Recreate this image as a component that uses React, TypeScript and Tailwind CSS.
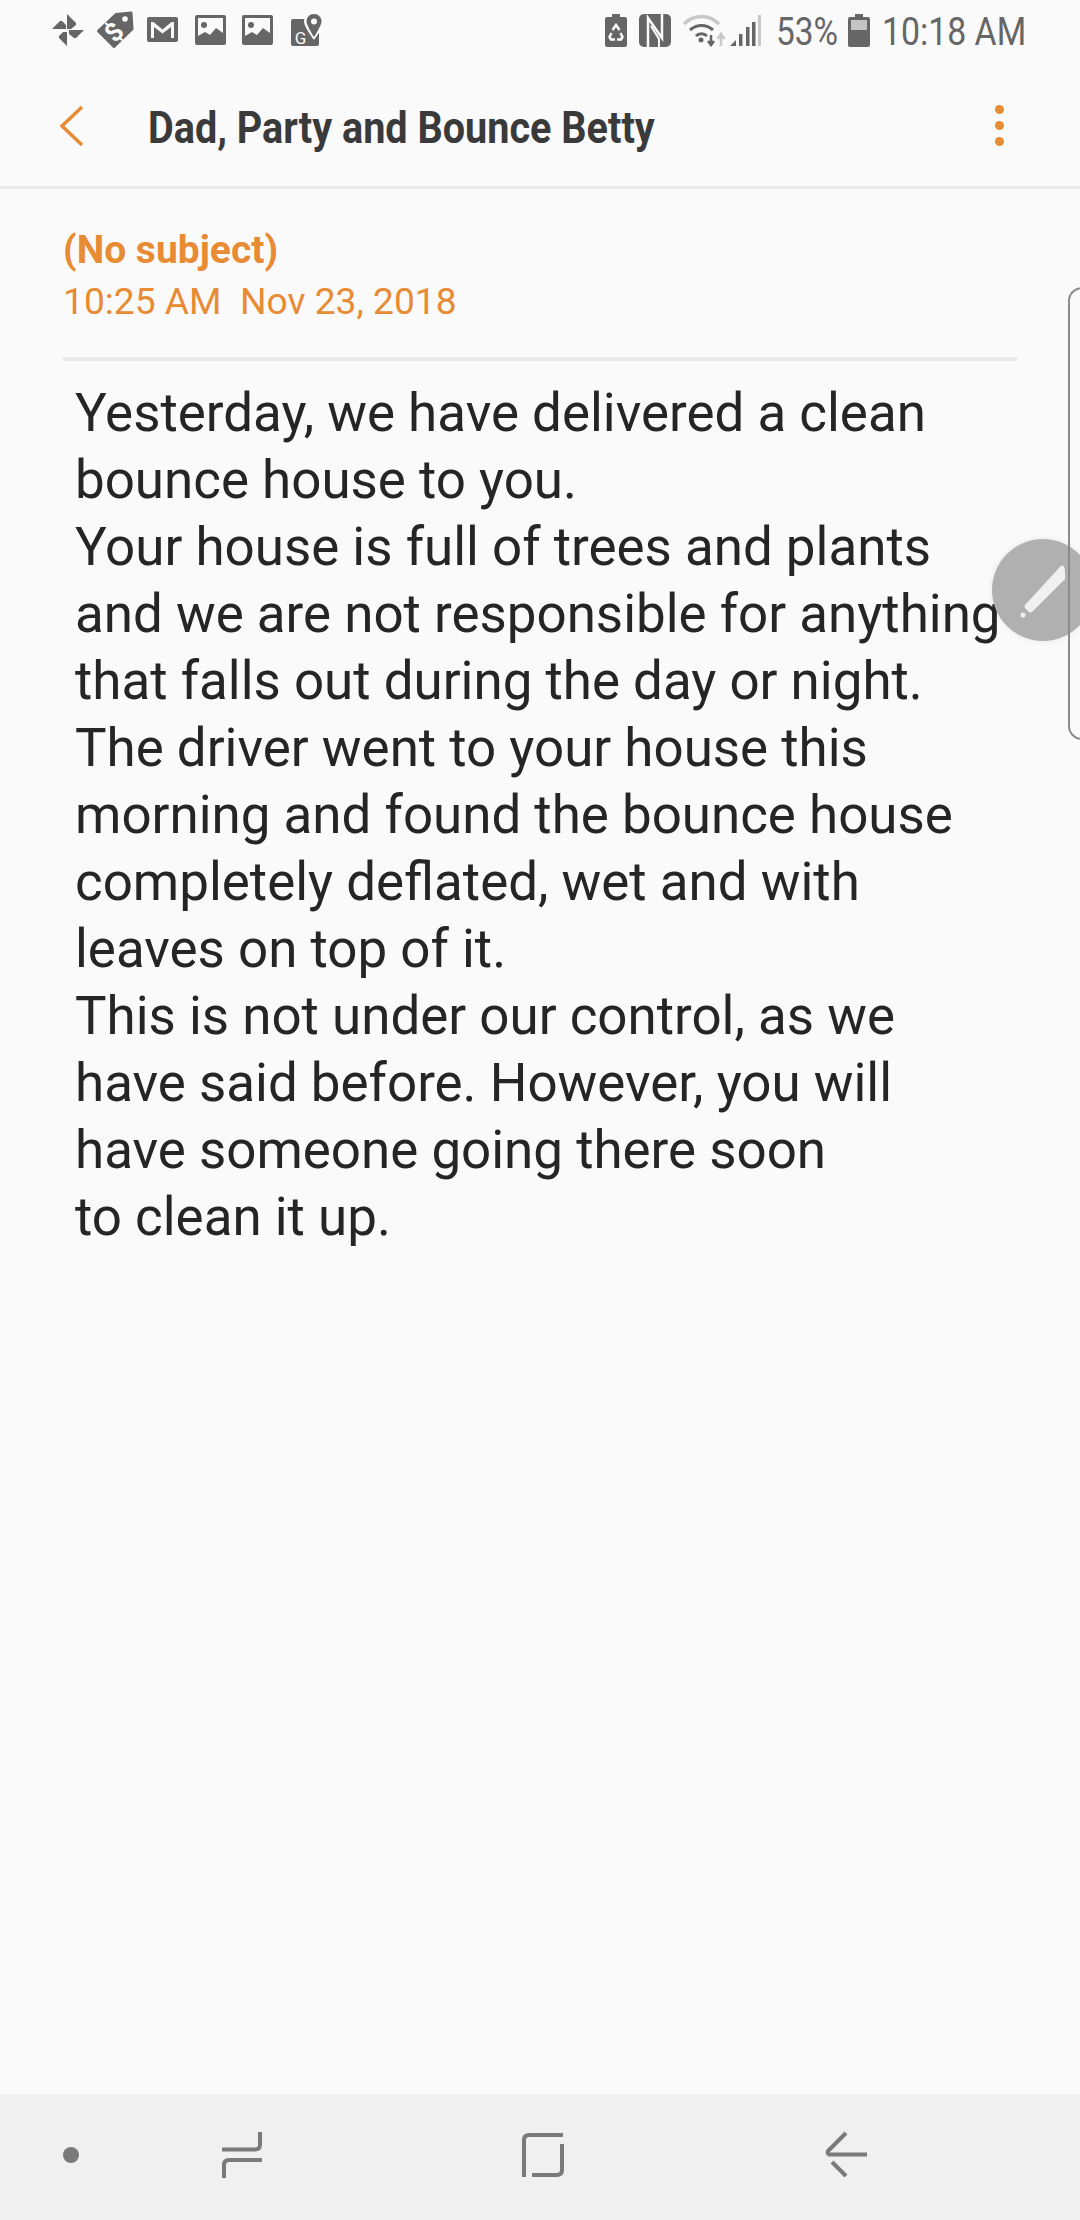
import React from "react";

const G = "#666666";

function Pinwheel() {
  return (
    <svg width="32" height="32" viewBox="0 0 32 32" fill={G}>
      <path d="M15 0l9 9v2l-5 4h-4z" />
      <path d="M17 16h15l-8 8h-2l-5-4z" />
      <path d="M15 18v14l-8-8v-2l4-4z" />
      <path d="M0 15l8-8h2l4 4v4z" />
    </svg>
  );
}

function Tag() {
  return (
    <svg width="38" height="38" viewBox="0 0 38 38">
      <path d="M20 3.500L35 2l1 16-18 17.500L2.500 20z" fill={G} stroke={G} strokeWidth="3" strokeLinejoin="round" />
      <circle cx="29" cy="8" r="2.800" fill="#fafafa" />
      <text x="18" y="30" fontSize="26" fontWeight="700" fill="#fafafa" textAnchor="middle" transform="rotate(-45 18 21)" fontFamily="Roboto, sans-serif">$</text>
    </svg>
  );
}

function Gmail() {
  return (
    <svg width="32" height="26" viewBox="0 0 32 26">
      <rect x="0" y="0" width="31" height="25" rx="2" fill={G} />
      <path d="M4 21V5h2.500l9 7.500 9-7.500H27v16h-3V10l-8.500 6.500L7 10v11z" fill="#fafafa" />
    </svg>
  );
}

function ImageIcon() {
  return (
    <svg width="32" height="30" viewBox="0 0 32 30">
      <rect x="0" y="0" width="31" height="30" rx="2" fill={G} />
      <rect x="3" y="3" width="25" height="20" fill="#fafafa" />
      <circle cx="9" cy="10" r="3" fill={G} />
      <path d="M3 21l7-4 5 3 6-7 7 5v12H3z" fill={G} />
    </svg>
  );
}

function MapsIcon() {
  return (
    <svg width="31" height="33" viewBox="0 0 31 33">
      <rect x="0" y="5" width="28" height="27" rx="2" fill={G} />
      <path d="M23 -2c-6 0-10 4.500-10 9.500C13 13 23 26 23 26s10-13 10-18.500C33 2.500 29-2 23-2z" fill="#fafafa" />
      <path d="M23 0c-4.500 0-7.500 3.500-7.500 7.500 0 4 7.500 15.500 7.500 15.500s7.500-11.500 7.500-15.500C30.500 3.500 27.500 0 23 0z" fill={G} />
      <circle cx="23" cy="7.500" r="3" fill="#fafafa" />
      <text x="9.500" y="30" fontSize="17" fontWeight="400" fill="#fafafa" textAnchor="middle" fontFamily="Roboto, sans-serif">G</text>
    </svg>
  );
}

function RecycleBattery() {
  return (
    <svg width="22" height="33" viewBox="0 0 22 33">
      <path d="M7 0h8v3h5q2 0 2 2v26q0 2-2 2H2q-2 0-2-2V5q0-2 2-2h5z" fill={G} />
      <path d="M7.500 16l3.500-5 3.500 5M6.500 19l-2 4 1.500 2.500h4M15.500 19l2 4-1.500 2.500h-4" stroke="#fafafa" strokeWidth="2.500" fill="none" />
    </svg>
  );
}

function Nfc() {
  return (
    <svg width="32" height="33" viewBox="0 0 32 33">
      <rect x="0" y="0" width="32" height="33" rx="5" fill={G} />
      <path d="M9 33V4l14 20V0" stroke="#fafafa" strokeWidth="2.500" fill="none" />
      <path d="M12 12l8 13v8" stroke="#fafafa" strokeWidth="2" fill="none" />
    </svg>
  );
}

function Wifi() {
  return (
    <svg width="44" height="33" viewBox="0 0 44 33" fill="none">
      <path d="M1 10C11 0 26 0 36 10" stroke="#c8c8c8" strokeWidth="3.500" />
      <path d="M7 16C14 10 23 10 30 16" stroke={G} strokeWidth="3" />
      <path d="M13 22c3-3 8-3 11 0" stroke={G} strokeWidth="3" />
      <circle cx="18" cy="26" r="2.500" fill={G} />
      <path d="M28 21v9M25 27l3 4 3-4" stroke={G} strokeWidth="2.500" />
      <path d="M38 32v-10M34.500 25l3.500-5 3.500 5" stroke="#c8c8c8" strokeWidth="2.500" />
    </svg>
  );
}

function Signal() {
  return (
    <svg width="32" height="33" viewBox="0 0 32 33">
      <path d="M0 32l6-6v6z" fill={G} />
      <rect x="9" y="20" width="3.500" height="12" fill={G} />
      <rect x="16" y="13" width="3.500" height="19" fill={G} />
      <rect x="22" y="8" width="3.500" height="24" fill={G} />
      <rect x="28" y="1" width="3" height="31" fill="#c8c8c8" />
    </svg>
  );
}

function Battery() {
  return (
    <svg width="22" height="33" viewBox="0 0 22 33">
      <path d="M7 0h8v3h5q2 0 2 2v26q0 2-2 2H2q-2 0-2-2V5q0-2 2-2h5z" fill={G} />
      <rect x="3" y="6" width="16" height="10" fill="#c4c4c4" />
    </svg>
  );
}

export default function App() {
  const lines = [
    "Yesterday, we have delivered a clean",
    "bounce house to you.",
    "Your house is full of trees and plants",
    "and we are not responsible for anything",
    "that falls out during the day or night.",
    "The driver went to your house this",
    "morning and found the bounce house",
    "completely deflated, wet and with",
    "leaves on top of it.",
    "This is not under our control, as we",
    "have said before. However, you will",
    "have someone going there soon",
    "to clean it up.",
  ];
  return (
    <div className="relative w-[1080px] h-[2220px] overflow-hidden bg-[#fafafa] flex flex-col font-['Roboto',sans-serif]">
      {/* Status bar */}
      <div className="h-[60px] flex items-center justify-between pl-[52px] pr-[56px] shrink-0">
        <div className="flex items-center">
          <Pinwheel />
          <div className="ml-[12px]"><Tag /></div>
          <div className="ml-[13px]"><Gmail /></div>
          <div className="ml-[16px]"><ImageIcon /></div>
          <div className="ml-[15px]"><ImageIcon /></div>
          <div className="ml-[17px]"><MapsIcon /></div>
        </div>
        <div className="flex items-center">
          <RecycleBattery />
          <div className="ml-[12px]"><Nfc /></div>
          <div className="ml-[12px]"><Wifi /></div>
          <div className="ml-[3px]"><Signal /></div>
          <span className="ml-[14px] w-[60px] mt-[3px] text-[38px] leading-[40px] text-[#666666] whitespace-nowrap">
            <span className="inline-block origin-left scale-x-[0.88]">53%</span>
          </span>
          <div className="ml-[12px]"><Battery /></div>
          <span className="ml-[12px] w-[142px] mt-[3px] text-[38px] leading-[40px] text-[#666666] whitespace-nowrap">
            <span className="inline-block origin-left scale-x-[0.89]">10:18 AM</span>
          </span>
        </div>
      </div>

      {/* Header */}
      <header className="relative h-[129px] shrink-0 flex items-center border-b-[3px] border-[#e8e8e8] pl-[60px] pr-[76px]">
        <svg width="24" height="42" viewBox="0 0 24 42" fill="none" className="shrink-0 mt-[6px]">
          <path d="M22 2L2 21l20 19" stroke="#e88b35" strokeWidth="3.500" />
        </svg>
        <h1 className="ml-[64px] text-[45px] leading-[56px] font-bold text-[#3a3a3a] whitespace-nowrap origin-left scale-x-[0.88] mt-[10px]">
          Dad, Party and Bounce Betty
        </h1>
        <div className="ml-auto flex flex-col gap-[7px] mt-[5px]">
          <span className="block w-[9px] h-[9px] rounded-full bg-[#e88b35]" />
          <span className="block w-[9px] h-[9px] rounded-full bg-[#e88b35]" />
          <span className="block w-[9px] h-[9px] rounded-full bg-[#e88b35]" />
        </div>
      </header>

      {/* Content */}
      <main className="flex-1 pl-[63px] pr-[63px]">
        <div className="pt-[36px] pb-[30px] border-b-[4px] border-[#e8e8e8]">
          <div className="text-[39px] leading-[51px] font-bold text-[#e88b35]">(No subject)</div>
          <div className="text-[37.200px] leading-[51px] text-[#e88b35] whitespace-pre">10:25 AM  Nov 23, 2018</div>
        </div>
        <div className="pl-[12px] pt-[19px] text-[52.900px] leading-[67px] text-[#252525]">
          {lines.map((l) => (
            <div key={l} className="whitespace-nowrap">{l}</div>
          ))}
        </div>
      </main>

      {/* Nav bar */}
      <nav className="h-[126px] shrink-0 bg-[#f0f0f0] flex items-center pl-[63px] pb-[4px]">
        <span className="block w-[16px] h-[16px] rounded-full bg-[#7a7a7a]" />
        <svg width="44" height="50" viewBox="0 0 44 50" fill="none" stroke="#7a7a7a" strokeWidth="4" className="ml-[141px]">
          <path d="M2 19.500h33q5 0 5-5V2" />
          <path d="M42 30H9q-5 0-5 5v13" />
        </svg>
        <svg width="46" height="46" viewBox="0 0 46 46" fill="none" stroke="#7a7a7a" strokeWidth="4" className="ml-[256px]">
          <path d="M43 3H9q-5 0-5 5v37" />
          <path d="M42 12v26q0 5-5 5H12" />
        </svg>
        <svg width="44" height="50" viewBox="0 0 44 50" fill="none" stroke="#7a7a7a" strokeWidth="4" className="ml-[258px]">
          <path d="M22 3L4 21q-1 2 1 3.500h38" />
          <path d="M8 32l14 14" />
        </svg>
      </nav>

      {/* Floating pen */}
      <div className="absolute left-[992px] top-[539px] w-[102px] h-[102px] rounded-full bg-[#b0b0b0] shadow-[0_0_6px_rgba(0,0,0,0.08)] flex items-center justify-center">
        <svg width="46" height="56" viewBox="0 0 46 56" fill="#f0f0f0">
          <path d="M5 43L38 7q3-4 5-3.500 2 1 2 8.500v5l-3 3-30 30q-2 1-3 0l-4-4q-1-2 0-3.500z" />
          <circle cx="3" cy="53" r="2.500" />
        </svg>
      </div>

      {/* Edge panel handle */}
      <div className="absolute left-[1068px] top-[287px] w-[20px] h-[453px] rounded-l-[14px] border-l-2 border-y-2 border-[#8c8c8c]" />
    </div>
  );
}
